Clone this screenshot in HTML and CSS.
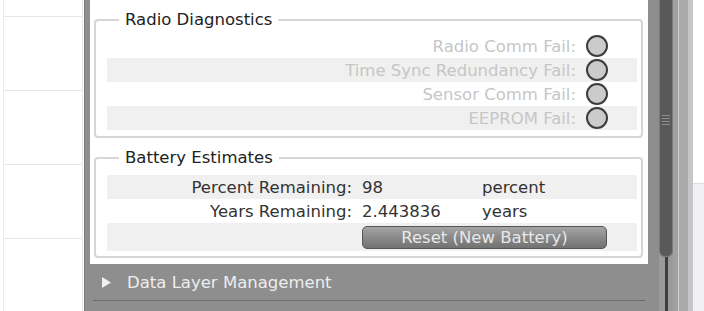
FILE: index.html
```html
<!DOCTYPE html>
<html lang="en">
<head>
    <meta charset="UTF-8">
    <title>Node Diagnostics</title>
    <link rel="stylesheet" href="styles.css">
</head>
<body>
    <div class="app">
        <div class="grid-pane">
            <div class="grid-cells"></div>
        </div>

        <div class="panel">
            <div class="card">
                <fieldset class="group diag">
                    <legend>Radio Diagnostics</legend>
                    <div class="row">
                        <span class="label">Radio Comm Fail:</span>
                        <span class="lamp"></span>
                    </div>
                    <div class="row alt">
                        <span class="label">Time Sync Redundancy Fail:</span>
                        <span class="lamp"></span>
                    </div>
                    <div class="row">
                        <span class="label">Sensor Comm Fail:</span>
                        <span class="lamp"></span>
                    </div>
                    <div class="row alt">
                        <span class="label">EEPROM Fail:</span>
                        <span class="lamp"></span>
                    </div>
                </fieldset>

                <fieldset class="group battery">
                    <legend>Battery Estimates</legend>
                    <div class="row alt">
                        <span class="label">Percent Remaining:</span>
                        <span class="value">98</span>
                        <span class="unit">percent</span>
                    </div>
                    <div class="row">
                        <span class="label">Years Remaining:</span>
                        <span class="value">2.443836</span>
                        <span class="unit">years</span>
                    </div>
                    <div class="row alt tall">
                        <span class="label"></span>
                        <button class="reset">Reset (New Battery)</button>
                    </div>
                </fieldset>
            </div>

            <div class="acc-header">
                <svg class="arrow" width="9" height="11" viewBox="0 0 9 11"><polygon points="0,0 9,5.5 0,11" fill="#f0f0f0"/></svg>
                <span>Data Layer Management</span>
            </div>
            <div class="acc-header next"></div>
        </div>

        <div class="scroll">
            <div class="thumb"><div class="grip"></div></div>
            <div class="track"></div>
        </div>
        <div class="rail"></div>
        <div class="side-pane">
            <div class="side-top"></div>
            <div class="side-bottom"></div>
        </div>
    </div>
</body>
</html>
```

FILE: styles.css
```css
body {
    margin: 0;
    font-family: "DejaVu Sans", Verdana, sans-serif;
    font-size: 16.5px;
    color: #333;
}
.app {
    display: flex;
    height: 311px;
    overflow: hidden;
}

/* left diagram area */
.grid-pane {
    width: 84px;
    flex: none;
    background: #fff;
}
.grid-cells {
    height: 100%;
    margin: 0 1px 0 3px;
    border-left: 1px solid #ececec;
    border-right: 1px solid #e6e6e6;
    background: repeating-linear-gradient(to bottom,
        transparent 0, transparent 16px,
        #e6e6e6 16px, #e6e6e6 17px,
        transparent 17px, transparent 74px);
}

/* properties panel */
.panel {
    width: 575px;
    flex: none;
    box-sizing: border-box;
    background: #8e8e8e;
    border-left: 1px solid #7a7a7a;
    padding-left: 5px;
    display: flex;
    flex-direction: column;
}
.card {
    flex: none;
    width: 558px;
    background: #fff;
    padding: 10px 0 6px;
}
.group {
    margin: 0 5px 0 4px;
    border: 2px solid #d6d6d6;
    border-radius: 4px;
    padding: 4px 4px 6px 11px;
    min-width: 0;
}
.group legend {
    margin-left: 12px;
    padding: 0 6px;
    line-height: 20px;
    color: #222;
}
.battery {
    margin-top: 10px;
    padding-top: 7px;
    padding-bottom: 5px;
}
.row {
    display: flex;
    align-items: center;
    height: 24px;
}
.row.alt {
    background: #f0f0f0;
}
.row.tall {
    height: 28px;
}
.diag .label {
    width: 469px;
    text-align: right;
    color: #c6c6c6;
}
.lamp {
    width: 22px;
    height: 22px;
    box-sizing: border-box;
    margin-left: 10px;
    border: 2px solid #3c3c3c;
    border-radius: 50%;
    background: #cbcbcb;
}
.battery .label {
    width: 245px;
    text-align: right;
}
.value {
    width: 120px;
    margin-left: 10px;
}
.reset {
    margin-left: 10px;
    width: 245px;
    height: 23px;
    padding: 0;
    font: inherit;
    color: #e8e8e8;
    background: linear-gradient(#a4a4a4, #8a8a8a 50%, #727272);
    border: 1px solid #555;
    border-radius: 5px;
}

.acc-header {
    flex: none;
    height: 36px;
    margin: 0 14px 0 3px;
    padding-left: 9px;
    display: flex;
    align-items: center;
    gap: 16px;
    color: #ededed;
    border-bottom: 1px solid #6c6c6c;
}
.acc-header.next {
    border-bottom: none;
}

/* scrollbar */
.scroll {
    width: 14px;
    flex: none;
    background: #9a9a9a;
    display: flex;
    flex-direction: column;
    align-items: center;
}
.thumb {
    flex: none;
    width: 14px;
    height: 257px;
    box-sizing: border-box;
    background: #595959;
    border: 1px solid #7a7a7a;
    border-top: none;
    border-radius: 0 0 6px 6px;
    padding-top: 115px;
}
.grip {
    height: 12px;
    margin: 0 2px;
    background: repeating-linear-gradient(to bottom,
        #8c8c8c 0, #8c8c8c 1px,
        transparent 1px, transparent 3px);
}
.track {
    width: 3px;
    flex: 1;
    background: #3e3e3e;
}
.rail {
    width: 20px;
    flex: none;
    background: linear-gradient(90deg,
        #a0a0a0 0, #a0a0a0 5px,
        #cfcfcf 5px, #cfcfcf 6px,
        #aaaaaa 6px, #aaaaaa 15px,
        #c6c6c6 15px, #c6c6c6 20px);
}
.side-pane {
    flex: 1;
    display: flex;
    flex-direction: column;
}
.side-top {
    height: 183px;
    background: #fff;
    border-bottom: 1px solid #dadde2;
}
.side-bottom {
    flex: 1;
    background: #eef0f3;
}
```
